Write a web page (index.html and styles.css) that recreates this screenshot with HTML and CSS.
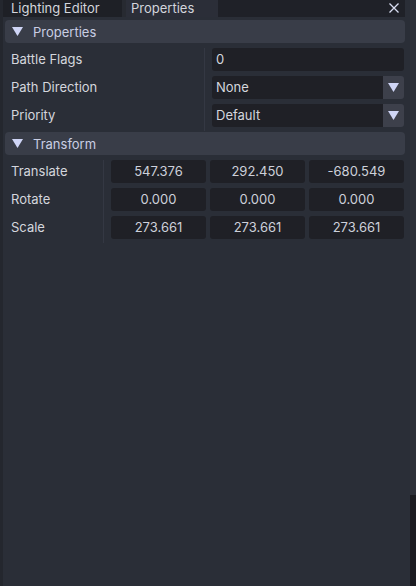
FILE: index.html
```html
<!DOCTYPE html>
<html>
<head>
<meta charset="utf-8">
<link rel="stylesheet" href="styles.css">
</head>
<body>
<div class="window">
  <div class="edge"></div>
  <div class="main">
    <div class="tabbar">
      <div class="tab">Lighting Editor</div>
      <div class="tab-gap"></div>
      <div class="tab active">Properties</div>
      <div class="tab-fill">
        <svg class="close" width="10" height="10" viewBox="0 0 10 10"><path d="M0.5 0.5 L9.5 9.5 M9.5 0.5 L0.5 9.5" stroke="#d9ddf2" stroke-width="1.3" fill="none"/></svg>
      </div>
    </div>

    <div class="section">
      <div class="header">
        <svg class="tri" width="11" height="9" viewBox="0 0 11 9"><path d="M0 0 H11 L5.5 9 Z" fill="#cfd5f6"/></svg>
        <span>Properties</span>
      </div>
      <div class="group">
        <div class="labels wide">
          <div class="label">Battle Flags</div>
          <div class="label">Path Direction</div>
          <div class="label">Priority</div>
        </div>
        <div class="sep"></div>
        <div class="fields">
          <div class="field"><span class="input">0</span></div>
          <div class="field combo"><span class="input">None</span><span class="arrow"><svg width="11" height="9" viewBox="0 0 11 9"><path d="M0 0 H11 L5.5 9 Z" fill="#cfd5f6"/></svg></span></div>
          <div class="field combo"><span class="input">Default</span><span class="arrow"><svg width="11" height="9" viewBox="0 0 11 9"><path d="M0 0 H11 L5.5 9 Z" fill="#cfd5f6"/></svg></span></div>
        </div>
      </div>
    </div>

    <div class="section">
      <div class="header">
        <svg class="tri" width="11" height="9" viewBox="0 0 11 9"><path d="M0 0 H11 L5.5 9 Z" fill="#cfd5f6"/></svg>
        <span>Transform</span>
      </div>
      <div class="group">
        <div class="labels narrow">
          <div class="label">Translate</div>
          <div class="label">Rotate</div>
          <div class="label">Scale</div>
        </div>
        <div class="sep"></div>
        <div class="fields">
          <div class="field triple"><span class="num">547.376</span><span class="num">292.450</span><span class="num">-680.549</span></div>
          <div class="field triple"><span class="num">0.000</span><span class="num">0.000</span><span class="num">0.000</span></div>
          <div class="field triple"><span class="num">273.661</span><span class="num">273.661</span><span class="num">273.661</span></div>
        </div>
      </div>
    </div>
  </div>
  <div class="scrollbar">
    <div class="track"></div>
    <div class="below"></div>
  </div>
</div>
</body>
</html>
```

FILE: styles.css
```css
* { box-sizing: border-box; }
html, body { margin: 0; padding: 0; }
body {
  width: 416px;
  height: 586px;
  overflow: hidden;
  background: #2a2e37;
  font-family: Inter, "Noto Sans", sans-serif;
  font-size: 13px;
  color: #d4d6dd;
}
.window {
  display: flex;
  width: 416px;
  height: 586px;
}
.edge {
  width: 3px;
  background: #24272e;
}
.main {
  flex: 1;
  display: flex;
  flex-direction: column;
  padding-right: 5px;
}
.tabbar {
  display: flex;
  height: 17px;
  background: #1f2128;
}
.tab {
  height: 17px;
  line-height: 16px;
  padding: 0 8px;
  width: 119px;
  background: #1e2026;
  color: #d3d5dc;
  white-space: nowrap;
}
.tab.active {
  width: 92px;
  padding-left: 5px;
  background: #2b2e38;
}
.tab-gap {
  width: 4px;
  background: #272a31;
}
.tab-fill {
  flex: 1;
  display: flex;
  justify-content: flex-end;
  align-items: center;
  padding-right: 6px;
}
.close { display: block; margin-top: -2px; }
.section {
  padding-left: 2px;
  margin-top: 3px;
}
.section + .section { margin-top: 5px; }
.header {
  height: 23px;
  background: #393d48;
  border-radius: 4px;
  display: flex;
  align-items: center;
  padding-left: 7px;
  color: #c9cee3;
}
.tri { display: block; margin-right: 10px; }
.group {
  display: flex;
  padding-top: 5px;
}
.labels {
  display: flex;
  flex-direction: column;
  gap: 5px;
  padding-left: 6px;
}
.labels.wide { width: 199px; }
.labels.narrow { width: 98px; }
.label {
  height: 23px;
  line-height: 23px;
  color: #d4d6dd;
  white-space: nowrap;
}
.sep {
  width: 1px;
  background: #343843;
  margin-bottom: -4px;
}
.fields {
  flex: 1;
  display: flex;
  flex-direction: column;
  gap: 5px;
  padding-left: 7px;
  padding-right: 1px;
}
.field {
  height: 23px;
  display: flex;
}
.input {
  flex: 1;
  background: #1f2026;
  border-radius: 3px;
  line-height: 23px;
  padding-left: 4px;
  color: #d4d6dd;
}
.combo .input { border-radius: 3px 0 0 3px; }
.arrow {
  width: 21px;
  background: #3d404b;
  border-radius: 0 3px 3px 0;
  display: flex;
  align-items: center;
  justify-content: center;
}
.arrow svg { display: block; }
.triple { gap: 4px; }
.num {
  flex: 1;
  background: #1f2026;
  border-radius: 3px;
  line-height: 23px;
  text-align: center;
  color: #cdd0da;
}
.scrollbar {
  width: 6px;
  display: flex;
  flex-direction: column;
}
.track {
  height: 495px;
  background: #2d3139;
}
.below {
  flex: 1;
  background: #1b1c21;
}
```
